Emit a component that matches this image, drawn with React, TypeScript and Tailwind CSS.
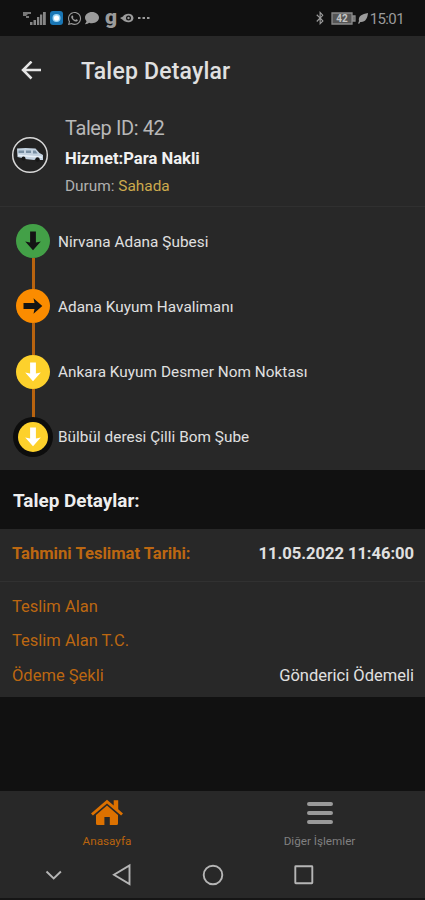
import { FaBluetoothB, FaComment, FaWhatsapp } from 'react-icons/fa';

function StatusBar() {
  return (
    <div className="flex h-9 shrink-0 items-center justify-between bg-[#111111] pl-[23px] pr-[21px] text-[#9b9b9b]">
      <div className="flex items-center">
        <svg width="23" height="15" viewBox="0 0 23 15" fill="currentColor">
          <path d="M0 1h8v2H5l-2 2h3v2H3V5H0z" opacity=".75" />
          <path d="M7 11h2.500v3H7zM10.500 9H13v5h-2.500zM14 6h2.300v8H14zM17 3.500h2.300V14H17zM20 1h2.800v13H20z" opacity=".85" />
        </svg>
        <svg className="ml-[4px]" width="13" height="14" viewBox="0 0 13 14">
          <rect width="13" height="14" rx="3" fill="#1976b5" />
          <circle cx="6.500" cy="7" r="4" fill="#9bd4f4" />
          <circle cx="6.500" cy="7" r="2.600" fill="#fff" />
        </svg>
        <FaWhatsapp className="ml-[4px]" size={15} />
        <FaComment className="ml-[3px]" size={14} />
        <span className="ml-[6px] -mt-[3px] h-5 w-3 text-[21px] font-black leading-5">g</span>
        <svg className="ml-[3px]" width="14" height="12" viewBox="0 0 14 12" fill="currentColor">
          <path fillRule="evenodd" d="M0 6 3 4.500C5 1 13 .500 13.500 6 13 11.500 5 11 3 8zM8.500 3.500a2.500 2.500 0 1 0 0 5 2.500 2.500 0 0 0 0-5z" />
          <circle cx="8.500" cy="6" r="1.200" />
        </svg>
        <svg className="ml-[4px]" width="12" height="3" fill="currentColor">
          <path d="M0 0h2.500v2H0zM4.500 0H7v2H4.500zM9 0h2.500v2H9z" />
        </svg>
      </div>
      <div className="flex items-center">
        <FaBluetoothB size={14} />
        <svg className="ml-[4px]" width="25" height="13" viewBox="0 0 25 13">
          <path d="M1 1h20v11H1zM22 4h2v5h-2z" fill="#555" stroke="#8c8c8c" strokeWidth="1.300" />
          <text x="11" y="10.200" fontSize="10" fontWeight="700" textAnchor="middle" fill="#c4c4c4">42</text>
        </svg>
        <svg className="ml-[2px]" width="10" height="11" viewBox="0 0 10 11" fill="currentColor">
          <path d="M10 0C4 1 0 3 1 8L0 10.500l1.200.300L2.300 9C7.500 9.500 9.500 5 10 0z" />
        </svg>
        <span className="ml-[2px] mt-px text-[15px] leading-5 tracking-[-0.6px]">15:01</span>
      </div>
    </div>
  );
}

function Van() {
  return (
    <svg className="shrink-0" width="38" height="38" viewBox="0 0 38 38">
      <circle cx="19" cy="19" r="17.300" fill="#222" stroke="#d8d8d8" strokeWidth="1.500" />
      <path d="M6 12.500Q14 11.500 24.500 12.500L28.500 17 32 19V24H29L26 23 23 24 14 23 11 22 6.500 21z" fill="#c3d2e0" />
      <path d="M7.500 14.500h5.500v2.500H7.500zM15 14.500h5v2.500h-5zM22 14.500h2.500l2 3H22z" fill="#788fa3" />
      <path d="M7 18.500 31 20.500V22L7 20z" fill="#e9f1f8" />
      <circle cx="12.500" cy="22.500" r="2" fill="#171717" />
      <circle cx="26.500" cy="23.500" r="2.200" fill="#171717" />
    </svg>
  );
}

type Kind = 'picked' | 'transit' | 'waiting' | 'last';

const discs: Record<Kind, { fill: string; arrow: string; turn: number; radius: number }> = {
  picked: { fill: '#43a047', arrow: '#141414', turn: 0, radius: 17 },
  transit: { fill: '#fb8c00', arrow: '#141414', turn: -90, radius: 17 },
  waiting: { fill: '#fdd12c', arrow: '#ffffff', turn: 0, radius: 17 },
  last: { fill: '#fdd12c', arrow: '#ffffff', turn: 0, radius: 15 },
};

function Disc({ kind }: { kind: Kind }) {
  const d = discs[kind];
  return (
    <svg className="shrink-0" width="40" height="40" viewBox="-20 -20 40 40">
      {kind === 'last' && <circle r="20" fill="#0d0d0d" />}
      <circle r={d.radius} fill={d.fill} />
      <path transform={`rotate(${d.turn})`} d="M-2.900-9.500H2.900V1.500L7.800.500 0 9.300-7.800.500-2.900 1.500z" fill={d.arrow} />
    </svg>
  );
}

const stops: { kind: Kind; name: string }[] = [
  { kind: 'picked', name: 'Nirvana Adana Şubesi' },
  { kind: 'transit', name: 'Adana Kuyum Havalimanı' },
  { kind: 'waiting', name: 'Ankara Kuyum Desmer Nom Noktası' },
  { kind: 'last', name: 'Bülbül deresi Çilli Bom Şube' },
];

export default function App() {
  return (
    <div className="flex h-[900px] w-[425px] flex-col overflow-hidden whitespace-nowrap bg-[#111111] font-[Roboto,sans-serif] text-[#e0e0e0]">
      <StatusBar />
      <header className="flex h-[69px] shrink-0 items-center bg-[#282828] pl-[21px]">
        <svg width="21" height="20" viewBox="0 0 21 20" fill="none" stroke="#e5e5e5" strokeWidth="2.500">
          <path d="M20 9H2.500M10.500.500L2 9l8.500 8.500" />
        </svg>
        <h1 className="ml-[39px] pt-[2px] text-[23px] font-medium leading-7 tracking-[0.2px]">Talep Detaylar</h1>
      </header>
      <section className="flex h-[102px] shrink-0 border-b border-[#303030] bg-[#282828] pl-[11px] pt-[10px]">
        <div className="pt-[21px]"><Van /></div>
        <div className="ml-4">
          <div className="text-[20px] leading-[26px] tracking-[-0.4px] text-[#b8b8b8]">Talep ID: 42</div>
          <div className="mt-[5px] text-[16.6px] font-bold leading-[26px] text-[#f1f1f1]">Hizmet:Para Nakli</div>
          <div className="mt-px text-[15.4px] leading-[26px] text-[#b0b0b0]">Durum: <span className="text-[#ccaa4d]">Sahada</span></div>
        </div>
      </section>
      <section className="flex h-[263px] shrink-0 flex-col bg-[#282828] pl-[13px] pt-[14px]">
        {stops.map((stop, i) => (
          <div key={stop.name}>
            {i > 0 && <div className="-my-[3px] ml-[19px] h-[31.300px] w-[2.500px] bg-[#b8630f]" />}
            <div className="flex h-10 items-center gap-[5px]">
              <Disc kind={stop.kind} />
              <span className="pt-px text-[15.3px] leading-5 tracking-[0.05px]">{stop.name}</span>
            </div>
          </div>
        ))}
      </section>
      <h2 className="flex h-[59px] shrink-0 items-center pl-[13px] pt-[4px] text-[18.900px] font-bold text-[#eeeeee]">Talep Detaylar:</h2>
      <section className="h-[168px] shrink-0 bg-[#282828]">
        <div className="flex h-[53px] items-center justify-between border-b border-[#313131] pb-px pl-3 pr-[11px] text-[16.600px] font-bold">
          <span className="text-[#bc6711]">Tahmini Teslimat Tarihi:</span>
          <span className="tracking-[-0.05px]">11.05.2022 11:46:00</span>
        </div>
        <div className="flex flex-col pl-3 pr-[11px] pt-[8px] text-[16.500px] leading-[34.300px] text-[#bc6711]">
          <div>Teslim Alan</div>
          <div>Teslim Alan T.C.</div>
          <div className="flex justify-between"><span>Ödeme Şekli</span><span className="text-[#e0e0e0]">Gönderici Ödemeli</span></div>
        </div>
      </section>
      <footer className="mt-auto h-[109px] shrink-0 border-b-2 border-[#151515] bg-[#282828]">
        <div className="flex h-[59px] text-[11.700px]">
          <div className="flex w-[214px] flex-col items-center pt-[8px] text-[#b9640e]">
            <svg width="34" height="28" viewBox="0 0 34 28" fill="#dc7100">
              <path d="M1 14.500 17 .700 23.700 6.400V1.200h4.500v9L33 14.500l-1.900 2L17 4.400 2.900 16.500z" />
              <path d="M6 16 17 6.600 28 16v8.500q0 1.500-1.500 1.500h-6.700v-8h-5.400v8H7.500Q6 26 6 24.500z" />
            </svg>
            <span className="mt-[8px] leading-[13px]">Anasayfa</span>
          </div>
          <div className="flex flex-1 flex-col items-center pt-[11px] text-[#808080]">
            <svg width="26" height="22" viewBox="0 0 26 22" stroke="#9a9a9a" strokeWidth="4" strokeLinecap="round">
              <path d="M2 2h22M2 11h22M2 20h22" />
            </svg>
            <span className="mt-[11px] leading-[13px]">Diğer İşlemler</span>
          </div>
        </div>
        <svg width="425" height="48" viewBox="0 0 425 48" fill="none" stroke="#b5b5b5" strokeWidth="1.900">
          <path d="m46.500 21.500 7.200 7 7.200-7" />
          <path d="M129.500 15.500v18.500L114 24.800z" />
          <circle cx="213" cy="25" r="9.300" />
          <rect x="295.300" y="16.300" width="17" height="17" rx=".5" />
        </svg>
      </footer>
    </div>
  );
}
